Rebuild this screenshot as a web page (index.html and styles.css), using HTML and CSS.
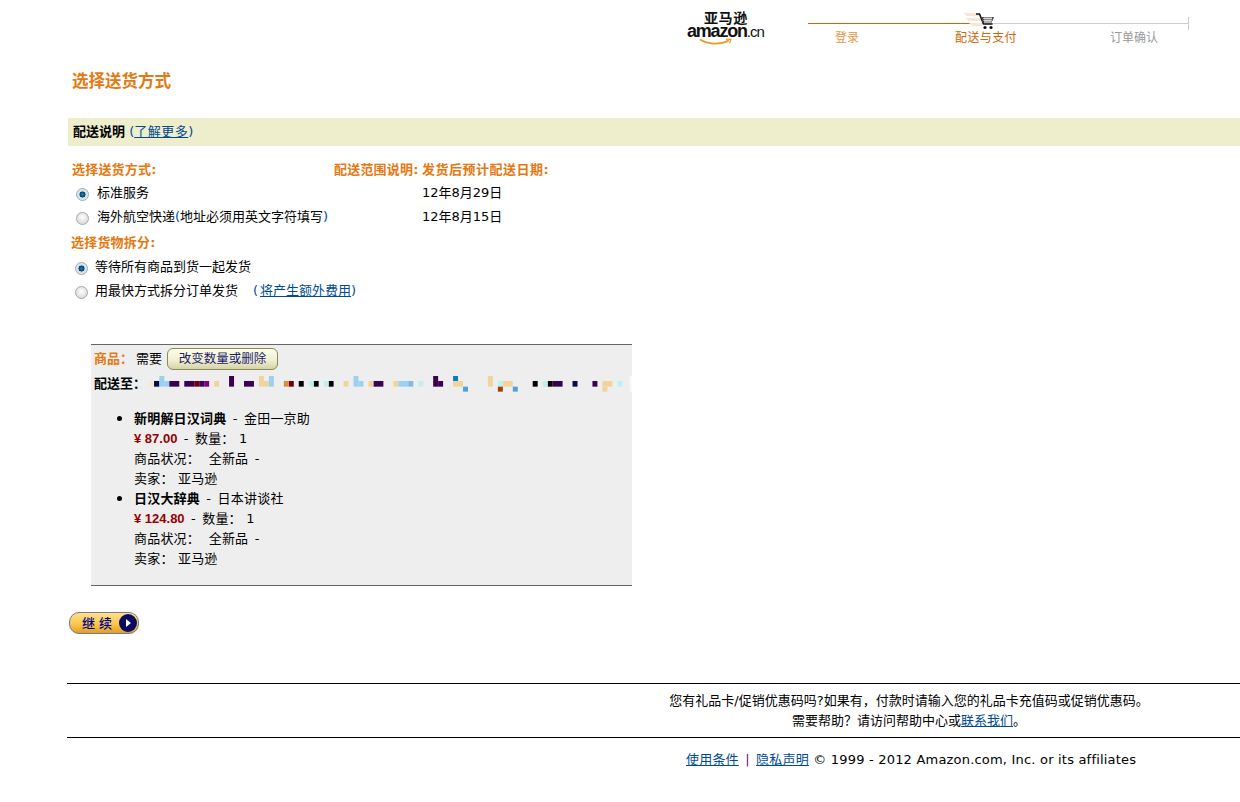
FILE: index.html
```html
<!DOCTYPE html>
<html lang="zh-CN">
<head>
<meta charset="utf-8">
<title>选择送货方式</title>
<link rel="stylesheet" href="styles.css">
</head>
<body>
<header class="top">
  <div class="logo">
    <div class="logo-cn">亚马逊</div>
    <div class="logo-en">amazon<span class="logo-tld">.cn</span></div>
    <svg class="smile" width="34" height="8" viewBox="0 0 34 8"><path d="M1 1.500C9 6.500 21 7 30 2.500" fill="none" stroke="#f09a1f" stroke-width="1.800"/><path d="M27 1.200L32 1.400 30.600 5.400" fill="none" stroke="#f09a1f" stroke-width="1.200"/></svg>
  </div>
  <div class="steps">
    <div class="track"><span class="track-done"></span><span class="track-todo"></span></div>
    <svg class="cart" width="34" height="17" viewBox="0 0 34 17">
      <path d="M0 0h14l5 3H4zM2 5h16l2 3H6zM6 10h12l2 3H10z" fill="#f7e6d4"/>
      <path d="M13 1h3.500l4 10h9" fill="none" stroke="#111" stroke-width="1.600"/>
      <path d="M18 4h13l-2.500 6H20z" fill="#444"/>
      <path d="M20 5.500h9M20.500 7.500h8M21 9h7M22 4v6M24 4v6M26 4v6M28 4v6" stroke="#fff" stroke-width=".7"/>
      <circle cx="22" cy="14.500" r="1.600" fill="#111"/><circle cx="28" cy="14.500" r="1.600" fill="#111"/>
    </svg>
    <div class="step-labels">
      <span class="step step-past">登录</span>
      <span class="step step-now">配送与支付</span>
      <span class="step step-next">订单确认</span>
    </div>
  </div>
</header>

<main class="page">
  <h1 class="title">选择送货方式</h1>
  <div class="band"><b>配送说明</b> <span class="paren">(<a class="more" href="#">了解更多</a>)</span></div>

  <div class="ship-grid">
    <div class="label">选择送货方式:</div>
    <div class="label">配送范围说明:</div>
    <div class="label label-wide">发货后预计配送日期:</div>

    <label class="opt"><input class="radio" type="radio" name="ship" checked><span>标准服务</span></label>
    <div></div>
    <div class="date">12年8月29日</div>

    <label class="opt"><input class="radio" type="radio" name="ship"><span>海外航空快递<span class="paren">(</span>地址必须用英文字符填写<span class="paren">)</span></span></label>
    <div></div>
    <div class="date">12年8月15日</div>
  </div>

  <div class="label split-label">选择货物拆分:</div>
  <label class="opt split"><input class="radio" type="radio" name="split" checked><span>等待所有商品到货一起发货</span></label>
  <label class="opt split"><input class="radio" type="radio" name="split"><span>用最快方式拆分订单发货<span class="note"><span class="paren">(</span><a href="#">将产生额外费用</a><span class="paren">)</span></span></span></label>

  <section class="box">
    <div class="box-head"><span class="label">商品<span class="colon">：</span></span> <span>需要</span> <button class="change" type="button">改变数量或删除</button></div>
    <div class="addr"><b class="addr-label">配送至<span class="colon">：</span></b>
      <svg class="mosaic" width="490" height="16" viewBox="175 105 1365 45" preserveAspectRatio="xMinYMin">
        <g fill="#f3ead0"><rect x="178" y="119" width="14" height="16"/></g>
        <g fill="#0a0a50"><rect x="192" y="119" width="15" height="16"/><rect x="1369" y="119" width="14" height="16"/></g>
        <g fill="#9ad0f0"><rect x="207" y="105" width="14" height="30"/><rect x="221" y="119" width="14" height="16"/><rect x="515" y="105" width="14" height="30"/><rect x="753" y="105" width="14" height="30"/><rect x="767" y="119" width="14" height="16"/><rect x="879" y="119" width="28" height="16"/></g>
        <g fill="#3c0050"><rect x="235" y="119" width="28" height="16"/><rect x="277" y="119" width="28" height="16"/><rect x="319" y="119" width="14" height="16"/><rect x="403" y="105" width="14" height="30"/><rect x="445" y="119" width="28" height="16"/><rect x="809" y="119" width="28" height="16"/><rect x="977" y="105" width="14" height="30"/><rect x="991" y="119" width="14" height="16"/><rect x="1313" y="119" width="28" height="16"/><rect x="1425" y="119" width="14" height="16"/></g>
        <g fill="#700010"><rect x="305" y="119" width="14" height="16"/><rect x="571" y="119" width="14" height="16"/></g>
        <g fill="#800080"><rect x="333" y="119" width="14" height="16"/></g>
        <g fill="#f0d49c"><rect x="361" y="119" width="14" height="16"/><rect x="487" y="105" width="14" height="30"/><rect x="501" y="119" width="14" height="16"/><rect x="725" y="119" width="14" height="16"/><rect x="795" y="119" width="14" height="16"/><rect x="865" y="119" width="14" height="16"/><rect x="1033" y="119" width="28" height="16"/><rect x="1131" y="105" width="14" height="30"/><rect x="1173" y="119" width="28" height="16"/><rect x="1453" y="119" width="28" height="16"/><rect x="1453" y="135" width="14" height="14"/></g>
        <g fill="#d09040"><rect x="557" y="119" width="14" height="16"/></g>
        <g fill="#000"><rect x="599" y="119" width="14" height="16"/><rect x="641" y="119" width="14" height="16"/><rect x="683" y="119" width="14" height="16"/><rect x="1257" y="119" width="14" height="16"/><rect x="1299" y="119" width="14" height="16"/></g>
        <g fill="#bff0f0"><rect x="627" y="119" width="14" height="16"/><rect x="669" y="119" width="14" height="16"/><rect x="935" y="119" width="14" height="16"/><rect x="1159" y="119" width="14" height="16"/><rect x="1285" y="119" width="14" height="16"/><rect x="1495" y="119" width="14" height="16"/></g>
        <g fill="#80b8f0"><rect x="907" y="119" width="14" height="16"/></g>
        <g fill="#0080c0"><rect x="1033" y="105" width="14" height="14"/></g>
        <g fill="#50a0e0"><rect x="1061" y="135" width="14" height="14"/><rect x="1201" y="135" width="14" height="14"/></g>
        <g fill="#a04000"><rect x="1159" y="135" width="14" height="14"/></g>
        <g fill="#fafafa"><rect x="1530" y="105" width="7" height="44"/></g>
      </svg>
    </div>
    <ul class="items">
      <li>
        <div><b>新明解日汉词典</b> <span class="sep">-</span> 金田一京助</div>
        <div><span class="price">¥ 87.00</span> <span class="sep">-</span> 数量<span class="colon">：</span> 1</div>
        <div>商品状况<span class="colon">：</span>&nbsp; 全新品 <span class="sep">-</span></div>
        <div>卖家<span class="colon">：</span> 亚马逊</div>
      </li>
      <li>
        <div><b>日汉大辞典</b> <span class="sep">-</span> 日本讲谈社</div>
        <div><span class="price">¥ 124.80</span> <span class="sep">-</span> 数量<span class="colon">：</span> 1</div>
        <div>商品状况<span class="colon">：</span>&nbsp; 全新品 <span class="sep">-</span></div>
        <div>卖家<span class="colon">：</span> 亚马逊</div>
      </li>
    </ul>
  </section>

  <button class="continue" type="button"><span>继 续</span><span class="go"></span></button>

  <footer class="foot">
    <div class="foot-help">
      <div>您有礼品卡/促销优惠码吗?如果有，付款时请输入您的礼品卡充值码或促销优惠码。</div>
      <div>需要帮助？请访问帮助中心或<a href="#">联系我们</a>。</div>
    </div>
    <div class="foot-legal"><a href="#">使用条件</a> <span class="pipe">|</span> <a href="#">隐私声明</a> © 1999 - 2012 Amazon.com, Inc. or its affiliates</div>
  </footer>
</main>
</body>
</html>
```
FILE: styles.css
```css
* { box-sizing: border-box; }
html, body { margin: 0; padding: 0; }
body {
  background: #fff;
  color: #000;
  font: 13px/20px "DejaVu Sans", "Noto Sans CJK SC", sans-serif;
  overflow: hidden;
  height: 802px;
}
a { color: #004b91; text-decoration: underline; }
b { font-weight: 700; }
.paren { color: #004b91; }
.more { letter-spacing: .5px; }
.colon { font-family: "Noto Sans CJK TC", sans-serif; line-height: 0; }

.top { display: flex; height: 72px; padding: 10px 0 0 687px; }
.logo { position: relative; width: 121px; }
.logo-cn { font: 700 14px/14px "Noto Sans CJK SC", sans-serif; margin-left: 17px; letter-spacing: .6px; color: #111; }
.logo-en { font: 700 18px/15px "Liberation Sans", sans-serif; letter-spacing: -1.200px; color: #111; }
.logo-tld { font: 400 15px/15px "Liberation Sans", sans-serif; letter-spacing: -1px; }
.smile { position: absolute; left: 12px; top: 28px; }

.steps { position: relative; width: 381px; padding-top: 7px; }
.track { display: flex; height: 13px; border-right: 1px solid #ccc; }
.track-done { width: 172px; height: 1px; margin-top: 6px; background: #c60; }
.track-todo { flex: 1; height: 1px; margin-top: 6px; background: #ccc; }
.cart { position: absolute; left: 155px; top: 3px; }
.step-labels { display: flex; padding: 1px 0 0 27px; font-size: 12px; line-height: 14px; }
.step { display: block; }
.step-past { color: #e69a4a; }
.step-now { color: #c60; margin-left: 96px; letter-spacing: .4px; }
.step-next { color: #999; margin-left: 93px; }

.page { padding-left: 68px; }
.title { margin: 0; padding-left: 4px; height: 46px; font: 700 16.500px/20px "DejaVu Sans", "Noto Sans CJK SC", sans-serif; color: #e47911; }
.band { height: 28px; padding-left: 5px; line-height: 28px; background: #eeeecc; }

.ship-grid { display: grid; grid-template-columns: 262px 88px 1fr; grid-auto-rows: 24px; margin: 12px 0 0 4px; align-items: center; }
.label { font-weight: 700; color: #e47911; letter-spacing: .2px; }
.label-wide { letter-spacing: .5px; }
.date { margin-top: -2px; }
.opt { display: flex; align-items: center; height: 24px; }
.opt > span { margin-top: -2px; }
.radio {
  appearance: none;
  width: 13px; height: 13px;
  margin: 1px 8px 0 4px;
  border-radius: 50%;
  border: 1px solid #a8a8a8;
  background: radial-gradient(circle at 50% 40%, #fff, #cfcfcf);
}
.radio:checked { background: radial-gradient(circle, #1583c4 0, #05406e 36%, #cfe0ea 42%, #f0f0f0 100%); }
.split-label { margin: 5px 0 0 3px; height: 21px; line-height: 16px; }
.split { padding-left: 3px; }
.split .radio { margin-right: 7px; }
.note { margin-left: 15px; }
.note a { margin-left: 2px; }

.box { width: 541px; height: 242px; margin: 40px 0 0 23px; padding: 1px 3px 0; background: #eee; border-top: 1px solid #666; border-bottom: 1px solid #666; }
.box-head { display: flex; align-items: center; gap: 5px; height: 26px; }
.box-head .label { margin-right: -2px; letter-spacing: 0; }
.change {
  width: 111px; height: 22px; padding: 0;
  font: 12.500px/20px "DejaVu Sans", "Noto Sans CJK SC", sans-serif;
  color: #1c1c70;
  border: 1px solid #8a8a5a;
  border-radius: 6px;
  background: linear-gradient(#fdfde8, #f2f0d2 55%, #d4d2a6);
}
.addr { display: flex; align-items: center; height: 24px; font-size: 13px; }
.addr-label { flex: none; white-space: nowrap; }
.mosaic { flex: none; margin-left: 2px; }
.items { margin: 11px 0 0; padding: 0 0 0 40px; list-style: disc; letter-spacing: .2px; }
.items li { height: 80px; line-height: 20px; }
.items li::marker { font-size: 17px; }
.items div { height: 20px; }
.sep { margin: 0 2px; }
.price { color: #900; font-weight: 700; font-family: "Liberation Sans", sans-serif; font-size: 13px; letter-spacing: 0; }

.continue {
  display: flex; align-items: center; justify-content: space-between;
  width: 70px; height: 22px; margin: 26px 0 0 1px; padding: 0 1px 0 12px;
  font: 500 13px/20px "Noto Sans CJK SC", sans-serif;
  letter-spacing: .5px;
  color: #00008b;
  border: 1px solid #77779a;
  border-radius: 10px;
  background: linear-gradient(#fde08a, #fbc64e 55%, #e0a020);
}
.go {
  position: relative;
  width: 18px; height: 18px; border-radius: 50%;
  background: #0a0a60;
}
.go::after {
  content: ""; position: absolute; left: 7px; top: 5px;
  border-left: 5px solid #fff; border-top: 4px solid transparent; border-bottom: 4px solid transparent;
}

.foot { margin-top: 49px; margin-left: -1px; border-top: 1px solid #000; }
.foot-help { height: 54px; padding: 7px 68px 0 579px; text-align: center; border-bottom: 1px solid #000; font-size: 13px; }
.foot-legal { padding: 12px 0 0 619px; font-size: 13px; letter-spacing: .2px; }
.pipe { color: #6b0d6b; margin: 0 2px; }
```
